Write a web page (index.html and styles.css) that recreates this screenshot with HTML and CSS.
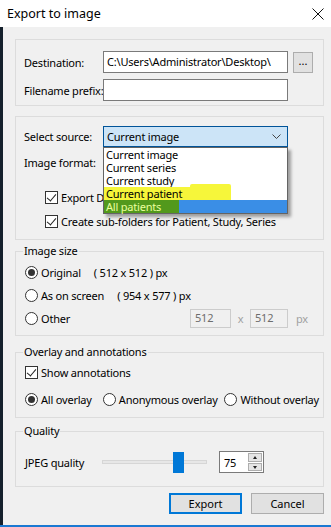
FILE: index.html
```html
<!DOCTYPE html>
<html lang="en">
  <head>
    <meta charset="utf-8" />
    <title>Export to image</title>
    <link rel="stylesheet" href="styles.css">
  </head>
  <body>
    <div class="window">
      <div class="titlebar">
        <span class="title">Export to image</span>
        <svg class="close" width="12" height="12" viewBox="0 0 12 12">
          <path d="M0.5 0.5 L11.5 11.5 M11.5 0.5 L0.5 11.5" stroke="#111" stroke-width="1" fill="none" />
        </svg>
      </div>

      <div class="body">
        <div class="group dest-group">
          <div class="form-row">
            <span class="lbl">Destination:</span>
            <div class="input">C:\Users\Administrator\Desktop\</div>
            <button class="browse">...</button>
          </div>
          <div class="form-row">
            <span class="lbl">Filename prefix:</span>
            <div class="input"></div>
          </div>
        </div>

        <div class="group source-group">
          <div class="form-row combo-row">
            <span class="lbl">Select source:</span>
            <div class="combo-wrap">
              <div class="combo open">
                <span>Current image</span>
                <svg width="9" height="5" viewBox="0 0 9 5">
                  <path d="M0.5 0.5 L4.5 4.5 L8.5 0.5" stroke="#444" stroke-width="1" fill="none" />
                </svg>
              </div>
              <ul class="dropdown">
                <li>Current image</li>
                <li>Current series</li>
                <li>Current study</li>
                <li class="marked">Current patient</li>
                <li class="selected"><span>All patients</span></li>
              </ul>
            </div>
          </div>
          <div class="form-row combo-row">
            <span class="lbl">Image format:</span>
            <div class="combo"></div>
          </div>
          <div class="check-row first">
            <span class="checkbox checked"></span>Export D
          </div>
          <div class="check-row">
            <span class="checkbox checked"></span>Create sub-folders for Patient, Study, Series
          </div>
        </div>

        <fieldset class="group size-group">
          <legend>Image size</legend>
          <div class="size-row">
            <span class="radio checked"></span>Original<span class="dim">( 512 x 512 ) px</span>
          </div>
          <div class="size-row">
            <span class="radio"></span>As on screen<span class="dim">( 954 x 577 ) px</span>
          </div>
          <div class="size-row other-row">
            <div class="opt"><span class="radio"></span>Other</div>
            <div class="input disabled">512</div>
            <span class="muted times">x</span>
            <div class="input disabled">512</div>
            <span class="muted px">px</span>
          </div>
        </fieldset>

        <fieldset class="group overlay-group">
          <legend>Overlay and annotations</legend>
          <div class="check-row annot">
            <span class="checkbox checked"></span>Show annotations
          </div>
          <div class="overlay-row">
            <div class="opt all"><span class="radio checked"></span>All overlay</div>
            <div class="opt anon"><span class="radio"></span>Anonymous overlay</div>
            <div class="opt"><span class="radio"></span>Without overlay</div>
          </div>
        </fieldset>

        <fieldset class="group quality-group">
          <legend>Quality</legend>
          <div class="quality-row">
            <span class="lbl">JPEG quality</span>
            <div class="slider">
              <div class="track"></div>
              <div class="thumb"></div>
            </div>
            <div class="spin">
              <span class="spin-val">75</span>
              <div class="spin-btns">
                <span class="up"></span>
                <span class="down"></span>
              </div>
            </div>
          </div>
        </fieldset>

        <div class="buttons">
          <button class="btn default">Export</button>
          <button class="btn">Cancel</button>
        </div>
      </div>
    </div>
  </body>
</html>
```

FILE: styles.css
```css
* {
  box-sizing: border-box;
}
body {
  margin: 0;
  font-family: "Noto Sans", "Open Sans", sans-serif;
  font-size: 11px;
  letter-spacing: -0.2px;
  color: #000;
  background: #f0f0f0;
}
.window {
  width: 331px;
  height: 527px;
  display: flex;
  flex-direction: column;
  background: #f0f0f0;
  border-bottom: 2px solid #1a79d2;
}
.titlebar {
  height: 27px;
  background: #fff;
  display: flex;
  align-items: center;
  justify-content: space-between;
  padding: 0 7px 0 7px;
}
.title {
  font-size: 12.5px;
  letter-spacing: 0;
  margin-top: -1px;
}
.body {
  flex: 1;
  border-left: 3px solid #15202c;
  padding: 12px 7px 0 12px;
}
.group {
  border: 1px solid #dcdcdc;
  margin: 0;
  width: 100%;
}
.dest-group {
  padding: 11px 8px 4px 8px;
}
.form-row {
  display: flex;
  align-items: center;
  height: 22px;
}
.form-row + .form-row {
  margin-top: 6px;
}
.lbl {
  width: 79px;
  white-space: nowrap;
}
.input {
  width: 185px;
  height: 22px;
  border: 1px solid #7a7a7a;
  background: #fff;
  padding: 0 3px;
  line-height: 19px;
  white-space: nowrap;
}
.browse {
  margin-left: 5px;
  width: 20px;
  height: 21px;
  border: 1px solid #adadad;
  background: #e1e1e1;
  font: inherit;
  padding: 0 0 4px 0;
  line-height: 1;
}

.source-group {
  margin-top: 10px;
  padding: 9px 8px 11px 8px;
}
.combo-row {
  height: 21px;
}
.combo-row + .combo-row {
  margin-top: 5px;
}
.combo-wrap {
  position: relative;
}
.combo {
  width: 185px;
  height: 21px;
  border: 1px solid #7a7a7a;
  background: #e5e5e5;
  display: flex;
  align-items: center;
  justify-content: space-between;
  padding: 0 6px 0 3px;
}
.combo.open {
  background: #cce4f7;
  border-color: #005499;
}
.dropdown {
  position: absolute;
  top: 21px;
  left: 0;
  width: 185px;
  margin: 0;
  padding: 0;
  list-style: none;
  background: #fff;
  border: 1px solid #646464;
  box-shadow: 3px 3px 3px rgba(0, 0, 0, 0.35);
  z-index: 2;
}
.dropdown li {
  height: 13px;
  line-height: 13px;
  padding-left: 2px;
  white-space: nowrap;
  position: relative;
}
.dropdown li.marked {
  background: linear-gradient(to right, #f6f63a 0, #f6f63a 127px, #fff 127px);
}
.dropdown li.marked::before {
  content: "";
  position: absolute;
  left: 86px;
  top: -3px;
  width: 41px;
  height: 4px;
  background: #f6f63a;
  border-radius: 2px 2px 0 0;
}
.dropdown li.selected {
  background: #3a8ee6;
  color: #eaff9e;
  padding-left: 0;
}
.dropdown li.selected span {
  display: block;
  width: 75px;
  height: 13px;
  padding-left: 2px;
  background: #52991c;
}

.check-row {
  display: flex;
  align-items: center;
  height: 13px;
  white-space: nowrap;
}
.source-group .check-row {
  padding-left: 21px;
}
.check-row.first {
  margin-top: 18px;
}
.check-row.first + .check-row {
  margin-top: 11px;
}
.checkbox {
  width: 13px;
  height: 13px;
  border: 1px solid #333;
  background: #fff;
  margin-right: 3px;
  position: relative;
  flex: none;
}
.checkbox.checked::after {
  content: "";
  position: absolute;
  left: 3px;
  top: 0px;
  width: 4px;
  height: 8px;
  border: solid #222;
  border-width: 0 1px 1px 0;
  transform: rotate(40deg);
}
.radio {
  width: 13px;
  height: 13px;
  border: 1px solid #333;
  border-radius: 50%;
  background: #fff;
  margin-right: 3px;
  position: relative;
  flex: none;
}
.radio.checked::after {
  content: "";
  position: absolute;
  left: 2px;
  top: 2px;
  width: 7px;
  height: 7px;
  border-radius: 50%;
  background: #333;
}

fieldset.group {
  min-width: 0;
  padding: 0 4px 0 9px;
}
legend {
  padding: 0 1px;
  margin-left: -2px;
  line-height: 14px;
}
.size-group {
  margin-top: 4px;
  padding-top: 3px !important;
  padding-bottom: 5px !important;
}
.size-row {
  display: flex;
  align-items: center;
  height: 23px;
  white-space: nowrap;
}
.dim {
  margin-left: 13px;
}
.other-row {
  display: grid;
  grid-template-columns: 165px 41px 19px 38px auto;
  align-items: center;
}
.opt {
  display: flex;
  align-items: center;
  white-space: nowrap;
}
.input.disabled {
  width: auto;
  height: 19px;
  border-color: #cccccc;
  background: #f0f0f0;
  color: #6d6d6d;
  line-height: 16px;
  padding-left: 4px;
}
.muted {
  color: #a0a0a0;
}
.times {
  text-align: center;
}
.px {
  padding-left: 8px;
}

.overlay-group {
  margin-top: 9px;
  padding-bottom: 11px !important;
}
.check-row.annot {
  margin-top: 7px;
}
.overlay-row {
  display: flex;
  align-items: center;
  height: 14px;
  margin-top: 13px;
}
.opt.all {
  width: 78px;
}
.opt.anon {
  width: 122px;
}

.quality-group {
  margin-top: 6px;
  padding-top: 13px !important;
  padding-bottom: 13px !important;
}
.quality-row {
  display: flex;
  align-items: center;
  height: 22px;
}
.quality-row .lbl {
  width: 77px;
}
.slider {
  position: relative;
  width: 105px;
  height: 22px;
}
.track {
  position: absolute;
  left: 0;
  right: 0;
  top: 9px;
  height: 4px;
  background: #e7e7e7;
  border: 1px solid #d6d6d6;
}
.thumb {
  position: absolute;
  left: 71px;
  top: 1px;
  width: 11px;
  height: 21px;
  background: #0078d7;
}
.spin {
  margin-left: 12px;
  width: 45px;
  height: 22px;
  border: 1px solid #7a7a7a;
  background: #fff;
  display: flex;
  align-items: center;
  justify-content: space-between;
  padding: 1px 1px 1px 4px;
}
.spin-btns {
  display: flex;
  flex-direction: column;
  gap: 1px;
  height: 18px;
}
.spin-btns span {
  width: 14px;
  height: 9px;
  background: #e5e5e5;
  border: 1px solid #adadad;
  position: relative;
}
.spin-btns span::after {
  content: "";
  position: absolute;
  left: 4px;
  border-left: 2.5px solid transparent;
  border-right: 2.5px solid transparent;
}
.spin-btns .up::after {
  top: 2px;
  border-bottom: 3px solid #222;
}
.spin-btns .down::after {
  top: 2px;
  border-top: 3px solid #222;
}

.buttons {
  display: flex;
  justify-content: flex-end;
  gap: 9px;
  margin-top: 6px;
}
.btn {
  width: 73px;
  height: 21px;
  border: 1px solid #adadad;
  background: #e1e1e1;
  font: inherit;
  padding: 0;
}
.btn.default {
  border: 2px solid #0078d7;
}
```
